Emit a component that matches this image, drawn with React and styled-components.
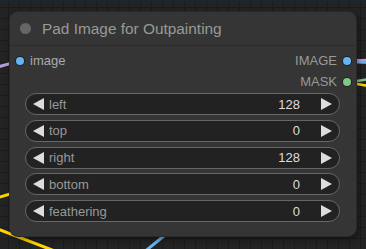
import styled, { createGlobalStyle } from "styled-components"

const GlobalStyle = createGlobalStyle`
    body {
        margin: 0;
        font-family: "Liberation Sans", Arial, sans-serif;
        background: #202020;
    }
`

const Canvas = styled.div`
    position: relative;
    width: 366px;
    height: 249px;
    overflow: hidden;
    background-color: #232323;
    background-image:
        linear-gradient(#1b1b1b 1px, transparent 1px),
        linear-gradient(90deg, #1b1b1b 1px, transparent 1px);
    background-size: 11px 11px;
    background-position: -3px -5px;
    border-top: 1px solid #1d2535;
    box-sizing: border-box;

    .links {
        position: absolute;
        inset: 0;
    }
`

const Node = styled.div`
    position: absolute;
    left: 10px;
    top: 11px;
    width: 346px;
    height: 224px;
    box-sizing: border-box;
    background: #353535;
    border-radius: 8px;
    box-shadow: 0 0 0 1px #2a2a2a, 2px 3px 6px rgba(0, 0, 0, 0.45);
    display: flex;
    flex-direction: column;
`

const Title = styled.div`
    height: 33px;
    display: flex;
    align-items: center;
    gap: 11px;
    padding-left: 10px;
    border-bottom: 1px solid #2b2b2b;
    color: #999;
    font-size: 15.4px;

    .dot {
        width: 11px;
        height: 11px;
        border-radius: 50%;
        background: #666;
    }
`

const Slots = styled.div`
    padding-top: 4px;
    display: flex;
    flex-direction: column;
`

const SlotRow = styled.div`
    height: 21px;
    display: flex;
    align-items: center;
    justify-content: space-between;
    padding: 0 5px 0 6px;
    font-size: 13px;
    color: #aaa;
`

const Slot = styled.span`
    display: flex;
    align-items: center;
    gap: 6px;
    flex-direction: ${(p) => (p.$out ? "row-reverse" : "row")};
    margin-left: ${(p) => (p.$out ? "auto" : "0")};
    color: ${(p) => (p.$out ? "#999" : "#aaa")};

    &::before {
        content: "";
        width: 8px;
        height: 8px;
        border-radius: 50%;
        background: ${(p) => p.$color};
        box-shadow: 0 0 0 1px #222;
    }
`

const Widgets = styled.div`
    margin-top: 1px;
    padding: 0 16px 0 15px;
    display: flex;
    flex-direction: column;
    gap: 4.75px;
`

const Widget = styled.div`
    height: 22px;
    box-sizing: border-box;
    border: 1px solid #666;
    border-radius: 11px;
    background: #222;
    display: flex;
    align-items: center;
    padding: 0 7px 0 7px;
    font-size: 13px;

    .label {
        color: #999;
        margin-left: 5px;
        flex: 1;
    }

    .value {
        color: #ddd;
        margin-right: 21px;
    }
`

const Arrow = styled.span`
    width: 0;
    height: 0;
    border-top: 6px solid transparent;
    border-bottom: 6px solid transparent;
    border-${(p) => (p.$dir === "left" ? "right" : "left")}: 11px solid #ddd;
`

const widgets = [
    { label: "left", value: 128 },
    { label: "top", value: 0 },
    { label: "right", value: 128 },
    { label: "bottom", value: 0 },
    { label: "feathering", value: 0 },
]

const App = () => {
    return (
        <Canvas>
            <GlobalStyle />
            <svg className="links" width="366" height="249">
                <path d="M -10 69 C 0 66, 5 62, 20 61" stroke="#b39ddb" strokeWidth="3" fill="none" />
                <path d="M 346 60 C 358 60, 360 59, 376 59" stroke="#b39ddb" strokeWidth="3" fill="none" />
                <path d="M 346 61 C 358 61, 360 62, 376 62" stroke="#64b5f6" strokeWidth="2" fill="none" />
                <path d="M 346 81 C 358 81, 360 79, 376 77" stroke="#81c784" strokeWidth="2.5" fill="none" />
                <path d="M 346 82 C 358 82, 360 84, 376 86" stroke="#ffd500" strokeWidth="2.5" fill="none" />
                <path d="M -10 199 L 20 190" stroke="#ffd500" strokeWidth="3" fill="none" />
                <path d="M -5 227 L 60 252" stroke="#ffd500" strokeWidth="3" fill="none" />
                <path d="M 170 230 L 143 252" stroke="#64b5f6" strokeWidth="3" fill="none" />
            </svg>
            <Node>
                <Title>
                    <span className="dot" />
                    Pad Image for Outpainting
                </Title>
                <Slots>
                    <SlotRow>
                        <Slot $color="#64b5f6">image</Slot>
                        <Slot $out $color="#64b5f6">IMAGE</Slot>
                    </SlotRow>
                    <SlotRow>
                        <Slot $out $color="#81c784">MASK</Slot>
                    </SlotRow>
                </Slots>
                <Widgets>
                    {widgets.map((w) => (
                        <Widget key={w.label}>
                            <Arrow $dir="left" />
                            <span className="label">{w.label}</span>
                            <span className="value">{w.value}</span>
                            <Arrow $dir="right" />
                        </Widget>
                    ))}
                </Widgets>
            </Node>
        </Canvas>
    )
}

export default App
